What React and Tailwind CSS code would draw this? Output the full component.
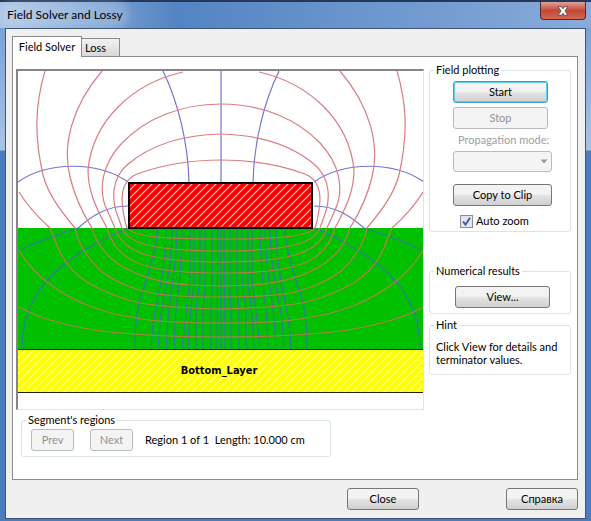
import React, { useState } from 'react';

// Left half of the field, the right half is mirrored from it
const potentialLines = [
    'M19 192 Q30 210 50 228 Q53 235 55 240 C60 256 70 271 87 282 C104 292 122 299 140 303 Q170 308 221 309',
    'M45 71 C35 105 34 135 43 175 C48 194 60 210 75 228 C77 241 86 257 100 270 C114 282 140 293 167 295 Q190 297 221 297',
    'M102 71 C72 106 62 145 70 177 C75 198 82 212 92 228 C96 243 106 255 117 263 C132 274 158 283 190 285 L221 286',
    'M183 72 C134 83 93 119 88 170 C88 190 95 206 107 228 C111 243 120 254 133 261 C150 269 172 273 221 273',
    'M221 104 C180 104 145 119 122 143 C103 163 97 189 107 210 L115 228 C119 241 130 250 147 255 C165 260 185 262 221 262',
    'M221 134 C184 135 150 145 127 165 C112 178 112 198 116 211 L122 228 C128 242 148 251 221 251',
    'M221 160 C190 160 159 166 137 174 C127 178 122 187 122 200 Q123 216 127 228 C134 237 165 239 221 239',
    'M19 250 C26 262 36 274 47 282 C60 292 73 300 87 305 C104 312 121 316 137 318 C155 322 180 323 221 323',
    'M19 307 C28 312 39 317 50 320 C70 326 90 330 110 332 C140 335 180 337 221 337',
];

const fluxLines = [
    'M163 71 C178 102 188 142 189 182',
    'M18 182 C48 161 98 161 128 182',
    'M128 206 C106 206 92 216 78 228 C59 234 38 241 19 251',
    'M128 228 C90 244 60 264 43 285 C29 304 22 323 22 349',
    'M157 228 C157 248 149 270 144 287 C138 305 135 315 135 349',
    'M166 228 C166 260 161 280 157 302 C152 322 152 335 151 349',
    'M172 228 C172 260 167 282 163 302 C159 322 159 335 158 349',
    'M177 228 C177 262 172 284 170 302 C167 322 167 335 166 349',
    'M182 228 C182 262 179 284 177 302 C174 322 175 335 174 349',
    'M190 228 V280 Q186 310 182 349',
    'M194 228 V285 Q189 315 188 349',
    'M200 228 V280 L196 310 V349',
    'M205 228 V290 L203 310 V349',
    'M212 228 V290 L211 310 V349',
    'M218 228 L217 349',
];

// Lines are tinted differently in air and in the dielectric
const HalfField = ({ red, blue }) => (
    <>
        <g stroke={blue}>
            {fluxLines.map((d) => <path key={d} d={d} />)}
        </g>
        <g stroke={red}>
            {potentialLines.map((d) => <path key={d} d={d} />)}
        </g>
    </>
);

const FieldLines = ({ clip, ...colors }) => (
    <g fill="none" strokeWidth="1.2" clipPath={`url(#${clip})`}>
        <path d="M221 71 V349" stroke={colors.blue} />
        <HalfField {...colors} />
        <g transform="translate(442 0) scale(-1 1)">
            <HalfField {...colors} />
        </g>
    </g>
);

const FieldPlot = () => (
    <svg viewBox="18 71 405 338" className="block w-full h-auto" role="img" aria-label="Field plot">
        <defs>
            <clipPath id="air"><rect x="18" y="71" width="405" height="157" /></clipPath>
            <clipPath id="dielectric"><rect x="18" y="228" width="405" height="121" /></clipPath>
            <pattern id="hatchRed" width="8" height="8" patternUnits="userSpaceOnUse">
                <path d="M-1 9 L9 -1 M-1 1 L1 -1 M7 9 L9 7" stroke="#eed8d0" strokeWidth="1.2" />
            </pattern>
            <pattern id="hatchYellow" width="8" height="8" patternUnits="userSpaceOnUse">
                <path d="M-1 9 L9 -1 M-1 1 L1 -1 M7 9 L9 7" stroke="#ffffc8" strokeWidth="1.2" />
            </pattern>
        </defs>
        <rect x="18" y="71" width="405" height="338" fill="#fff" />
        <rect x="18" y="228" width="405" height="121" fill="#00c000" />
        <FieldLines clip="air" red="#d97d82" blue="#7474cf" />
        <FieldLines clip="dielectric" red="#b08048" blue="#3578a4" />
        <rect x="129" y="183" width="183" height="45" fill="#ff0000" />
        <rect x="129" y="183" width="183" height="45" fill="url(#hatchRed)" stroke="#000" strokeWidth="2" />
        <rect x="18" y="349" width="405" height="44" fill="#ffff00" />
        <rect x="18" y="349" width="405" height="44" fill="url(#hatchYellow)" />
        <path d="M18 349.5 H423 M18 392.5 H423" stroke="#222" />
        <text x="219" y="374" textAnchor="middle" className="text-[11px] font-bold font-['DejaVu_Sans_Condensed',sans-serif]">Bottom_Layer</text>
    </svg>
);

const Group = ({ title, className, children }) => (
    <fieldset className={`rounded-[3px] border border-[#dce5e6] min-w-0 ${className}`}>
        <legend className="ml-1 px-[2px] leading-[14px]">{title}</legend>
        {children}
    </fieldset>
);

const Button = ({ className = '', focused, ...props }) => (
    <button
        type="button"
        className={`h-[22px] rounded-[3px] border text-center leading-[14px] disabled:border-[#b8bcbc] disabled:bg-none disabled:bg-[#f4f4f4] disabled:text-[#929292] bg-gradient-to-b from-[#f3f3f3] from-45% via-[#e2e2e2] via-55% to-[#d0d0d0] ${focused ? 'border-[#3c9cc4] ring-1 ring-inset ring-[#5fd0ee]' : 'border-[#777]'} ${className}`}
        {...props}
    />
);

const App = () => {
    const [tab, setTab] = useState('field');
    const [autoZoom, setAutoZoom] = useState(true);

    return (
        <div className="flex flex-col min-h-screen px-[5px] pb-1 border-t-2 border-[#26385a] bg-[linear-gradient(#6d9bd3,#a9c3e6_148px,#4b7cbd_149px)] font-[Lato,'Liberation_Sans',sans-serif] text-[11px] text-black">
            <header className="-mx-[5px] pl-[7px] pr-[5px] flex items-start justify-between h-[26px] bg-linear-to-r from-[#a9c4e6] via-[#5484c3] via-30% to-[#88abda]">
                <h1 className="mt-1 leading-[18px] text-[12px] rounded-full bg-white/20 shadow-[0_0_8px_6px_rgba(255,255,255,0.2)]">
                    Field Solver and Lossy
                </h1>
                <button type="button" aria-label="Close window" className="w-[46px] h-[18px] flex items-center justify-center rounded-b-[4px] border border-t-0 border-[#542832] bg-linear-to-b from-[#dda197] via-[#c2483b] via-50% to-[#d5674f]">
                    <svg width="12" height="10" viewBox="0 0 12 10">
                        <path d="M1 .7h3.4L6 2.8 7.6.7H11L7.9 5 11 9.3H7.6L6 7.2 4.4 9.3H1L4.1 5z" fill="#fff" stroke="#51404a" strokeWidth=".8" />
                    </svg>
                </button>
            </header>

            <main className="flex-1 flex flex-col border border-[#40547a] bg-[#f0f0f0] px-[7px] pt-[7px]">
                <div role="tablist" className="relative z-10 flex items-end -mb-px -ml-px">
                    <button
                        type="button"
                        role="tab"
                        aria-selected={tab === 'field'}
                        onClick={() => setTab('field')}
                        className="w-[70px] h-[21px] border border-b-0 border-[#8c8c8c] bg-white whitespace-nowrap leading-[14px]"
                    >
                        Field Solver
                    </button>
                    <button
                        type="button"
                        role="tab"
                        aria-selected={tab === 'loss'}
                        onClick={() => setTab('loss')}
                        className="w-[38px] h-[19px] pl-[3px] text-left border border-l-0 border-[#8c8c8c] bg-linear-to-b from-[#f2f2f2] to-[#d8d8d8] leading-[14px]"
                    >
                        Loss
                    </button>
                </div>

                <section className="-ml-px border border-[#8c8c8c] bg-white pt-[6px] pl-[3px] pr-[6px] pb-[22px]">
                    <div className="flex items-start gap-[5px]">
                        <div className="flex-1 min-w-0 mt-[6px] border-t-2 border-l-2 border-b border-r border-t-[#858585] border-l-[#858585] border-b-[#e3e3e3] border-r-[#e3e3e3]">
                            <FieldPlot />
                        </div>

                        <aside className="w-[142px] shrink-0 flex flex-col">
                            <Group title="Field plotting" className="pb-[3px]">
                                <div className="flex flex-col items-start pl-[23px] pt-1">
                                    <Button focused className="w-[95px]">Start</Button>
                                    <Button disabled className="w-[95px] mt-1">Stop</Button>
                                    <label htmlFor="mode" className="mt-1 ml-[5px] leading-[14px] text-[#a0a0a0] whitespace-nowrap">Propagation mode:</label>
                                    <div className="relative mt-1">
                                        <select id="mode" disabled className="block appearance-none w-[99px] h-[21px] rounded-[3px] border border-[#b8bcbc] bg-[#f4f4f4]" />
                                        <svg className="absolute right-1 top-2 pointer-events-none" width="8" height="5" viewBox="0 0 8 5">
                                            <path d="M0.5 0.5h7L4 4.5z" fill="#999" />
                                        </svg>
                                    </div>
                                    <Button className="w-[99px] mt-3">Copy to Clip</Button>
                                    <label className="mt-2 ml-[7px] flex items-center gap-[3px] leading-[14px]">
                                        <span className="relative flex">
                                            <input
                                                type="checkbox"
                                                checked={autoZoom}
                                                onChange={(e) => setAutoZoom(e.target.checked)}
                                                className="appearance-none w-[13px] h-[13px] border border-[#8a8f94] bg-[#e4e8ee]"
                                            />
                                            {autoZoom && (
                                                <svg className="absolute inset-0 pointer-events-none" width="13" height="13" viewBox="0 0 13 13">
                                                    <path d="M3 6.5 L5.5 9.7 L10 2.7" fill="none" stroke="#4358a8" strokeWidth="1.9" />
                                                </svg>
                                            )}
                                        </span>
                                        Auto zoom
                                    </label>
                                </div>
                            </Group>

                            <Group title="Numerical results" className="mt-8 pt-2 pb-[5px]">
                                <Button className="block ml-[25px] w-[95px]">View...</Button>
                            </Group>

                            <Group title="Hint" className="mt-1 pt-2 pb-2">
                                <p className="px-[6px] leading-[13px]">Click View for details and terminator values.</p>
                            </Group>
                        </aside>
                    </div>

                    <Group title="Segment's regions" className="ml-[5px] mt-[3px] max-w-[310px] pb-[5px]">
                        <div className="flex items-center pl-[9px] pt-[2px]">
                            <Button disabled className="w-[43px]">Prev</Button>
                            <Button disabled className="w-[43px] ml-4">Next</Button>
                            <p className="ml-3 whitespace-pre">Region 1 of 1  Length: 10.000 cm</p>
                        </div>
                    </Group>
                </section>

                <footer className="flex justify-end gap-[87px] pt-2 pb-2">
                    <Button className="w-[72px]">Close</Button>
                    <Button className="w-[72px]">Справка</Button>
                </footer>
            </main>
        </div>
    );
};

export default App;
